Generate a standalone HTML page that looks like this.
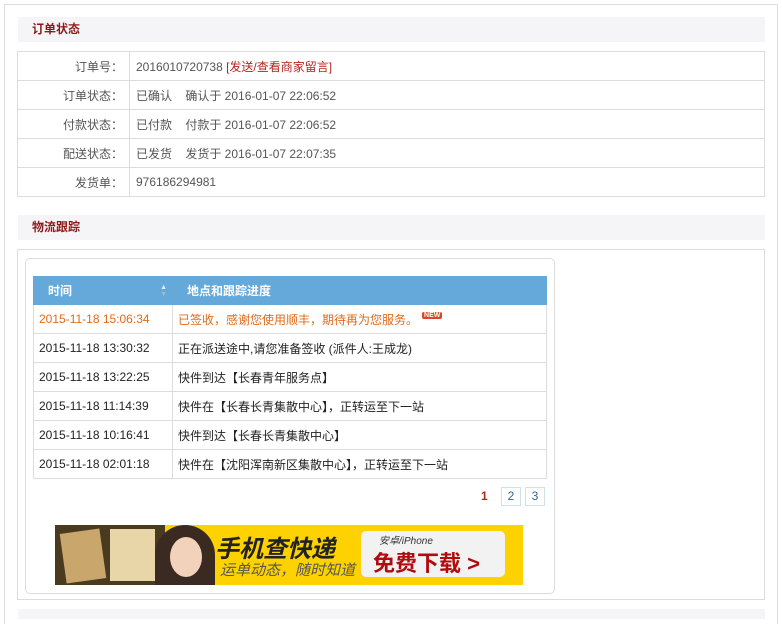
<!DOCTYPE html>
<html><head><meta charset="utf-8"><style>
*{margin:0;padding:0;box-sizing:border-box}
body{width:782px;height:616px;background:#fff;font:12px "Liberation Sans","Noto Sans CJK SC",sans-serif;color:#333;position:relative;overflow:hidden}
.a{position:absolute}
.hd{position:absolute;left:18px;width:747px;height:25px;background:#f5f4f6;color:#8b1a1a;font-weight:bold;line-height:25px;padding-left:14px}
table{border-collapse:collapse}
.info{position:absolute;left:17px;top:51px;width:748px;color:#555}
.info td{border:1px solid #dcdcdc;height:29px;padding:0 6px}
.info td.l{width:112px;text-align:right;color:#555}
.tr{position:absolute;left:33px;top:276px;width:514px}
.tr th{background:#65a9da;color:#fff;height:28px;text-align:left;padding-left:14px;font-weight:bold;border:1px solid #65a9da;vertical-align:middle;position:relative}
.tr td{border:1px solid #dcdcdc;height:29px;padding:0 5px;color:#222}
.tr tr.o td{color:#e06b1c}
.pg{position:absolute;top:487px;width:20px;height:19px;border:1px solid #cfe0ea;color:#336699;text-align:center;line-height:17px}
</style></head><body>
<div class="a" style="left:4px;top:4px;width:774px;height:620px;border:1px solid #ddd;border-bottom:none"></div>
<div class="hd" style="top:17px">订单状态</div>
<table class="info">
<tr><td class="l">订单号：</td><td>2016010720738 <span style="color:#b3261e">[发送/查看商家留言]</span></td></tr>
<tr><td class="l">订单状态：</td><td>已确认&nbsp;&nbsp;&nbsp;&nbsp;确认于 2016-01-07 22:06:52</td></tr>
<tr><td class="l">付款状态：</td><td>已付款&nbsp;&nbsp;&nbsp;&nbsp;付款于 2016-01-07 22:06:52</td></tr>
<tr><td class="l">配送状态：</td><td>已发货&nbsp;&nbsp;&nbsp;&nbsp;发货于 2016-01-07 22:07:35</td></tr>
<tr><td class="l">发货单：</td><td>976186294981</td></tr>
</table>
<div class="hd" style="top:215px">物流跟踪</div>
<div class="a" style="left:17px;top:249px;width:748px;height:351px;border:1px solid #dcdcdc"></div>
<div class="a" style="left:25px;top:258px;width:530px;height:336px;border:1px solid #dcdcdc;border-radius:5px"></div>
<table class="tr">
<tr><th style="width:139px">时间<span style="position:absolute;right:5px;top:7px;font-size:7px;line-height:7px;color:#e8eef4">▲<br><span style="color:#9bbcd8">▼</span></span></th><th>地点和跟踪进度</th></tr>
<tr class="o"><td>2015-11-18 15:06:34</td><td>已签收，感谢您使用顺丰，期待再为您服务。<span style="position:relative;top:-7px;left:4px;background:#d9472b;color:#fff;font-size:7px;font-weight:bold;padding:0 2px;border-radius:2px">NEW</span></td></tr>
<tr><td>2015-11-18 13:30:32</td><td>正在派送途中,请您准备签收 (派件人:王成龙)</td></tr>
<tr><td>2015-11-18 13:22:25</td><td>快件到达【长春青年服务点】</td></tr>
<tr><td>2015-11-18 11:14:39</td><td>快件在【长春长青集散中心】，正转运至下一站</td></tr>
<tr><td>2015-11-18 10:16:41</td><td>快件到达【长春长青集散中心】</td></tr>
<tr><td>2015-11-18 02:01:18</td><td>快件在【沈阳浑南新区集散中心】，正转运至下一站</td></tr>
</table>
<div class="a" style="left:481px;top:489px;color:#b3261e;font-weight:bold">1</div>
<div class="pg" style="left:501px">2</div>
<div class="pg" style="left:525px">3</div>
<div class="a" style="left:55px;top:525px;width:468px;height:60px;background:#fdd200;overflow:hidden">
<div class="a" style="left:0;top:0;width:110px;height:60px;background:#4a3a20"></div>
<div class="a" style="left:8px;top:6px;width:40px;height:50px;background:#c9a66b;transform:rotate(-8deg)"></div>
<div class="a" style="left:55px;top:4px;width:45px;height:52px;background:#e8d6a8"></div>
<div class="a" style="left:100px;top:0;width:60px;height:60px;background:#3a2a22;border-radius:30px 30px 0 0"></div>
<div class="a" style="left:115px;top:12px;width:32px;height:40px;background:#f3d2bc;border-radius:50%"></div>
<div class="a" style="left:160px;top:4px;font-size:24px;font-weight:bold;font-style:italic;color:#222">手机查快递</div>
<div class="a" style="left:165px;top:34px;font-size:15px;font-style:italic;color:#555">运单动态，随时知道</div>
<div class="a" style="left:306px;top:6px;width:144px;height:46px;background:#f2f2f2;border-radius:5px"></div>
<div class="a" style="left:324px;top:7px;font-size:10px;font-style:italic;color:#333">安卓/iPhone</div>
<div class="a" style="left:318px;top:21px;font-size:22px;font-weight:bold;color:#b00c10">免费下载 &gt;</div>
</div>
<div class="a" style="left:18px;top:609px;width:747px;height:10px;background:#f5f4f6"></div>
</body></html>
